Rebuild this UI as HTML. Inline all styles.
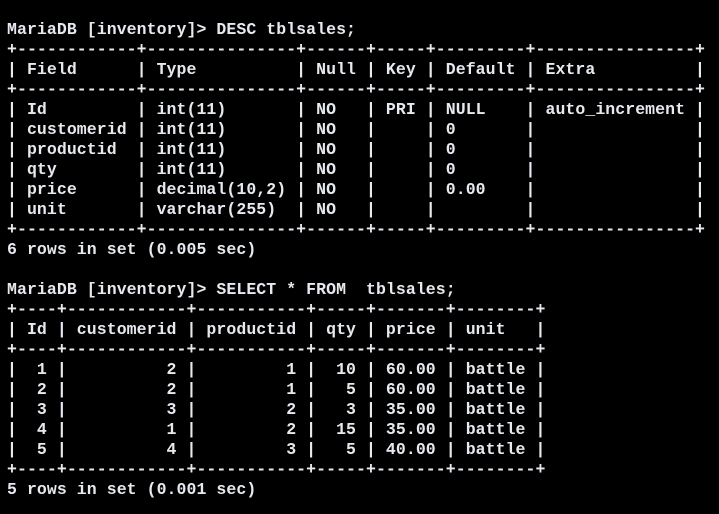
<!DOCTYPE html>
<html><head><meta charset="utf-8"><style>
html,body{margin:0;padding:0;background:#000;width:719px;height:514px;overflow:hidden}
pre{margin:0;position:absolute;left:7px;top:20px;font-family:"Liberation Mono",monospace;font-weight:bold;font-size:16.5px;line-height:20px;color:#e6e9ee;white-space:pre;letter-spacing:0.07px}
</style></head><body><pre>MariaDB [inventory]&gt; DESC tblsales;
+------------+---------------+------+-----+---------+----------------+
| Field      | Type          | Null | Key | Default | Extra          |
+------------+---------------+------+-----+---------+----------------+
| Id         | int(11)       | NO   | PRI | NULL    | auto_increment |
| customerid | int(11)       | NO   |     | 0       |                |
| productid  | int(11)       | NO   |     | 0       |                |
| qty        | int(11)       | NO   |     | 0       |                |
| price      | decimal(10,2) | NO   |     | 0.00    |                |
| unit       | varchar(255)  | NO   |     |         |                |
+------------+---------------+------+-----+---------+----------------+
6 rows in set (0.005 sec)

MariaDB [inventory]&gt; SELECT * FROM  tblsales;
+----+------------+-----------+-----+-------+--------+
| Id | customerid | productid | qty | price | unit   |
+----+------------+-----------+-----+-------+--------+
|  1 |          2 |         1 |  10 | 60.00 | battle |
|  2 |          2 |         1 |   5 | 60.00 | battle |
|  3 |          3 |         2 |   3 | 35.00 | battle |
|  4 |          1 |         2 |  15 | 35.00 | battle |
|  5 |          4 |         3 |   5 | 40.00 | battle |
+----+------------+-----------+-----+-------+--------+
5 rows in set (0.001 sec)</pre></body></html>
